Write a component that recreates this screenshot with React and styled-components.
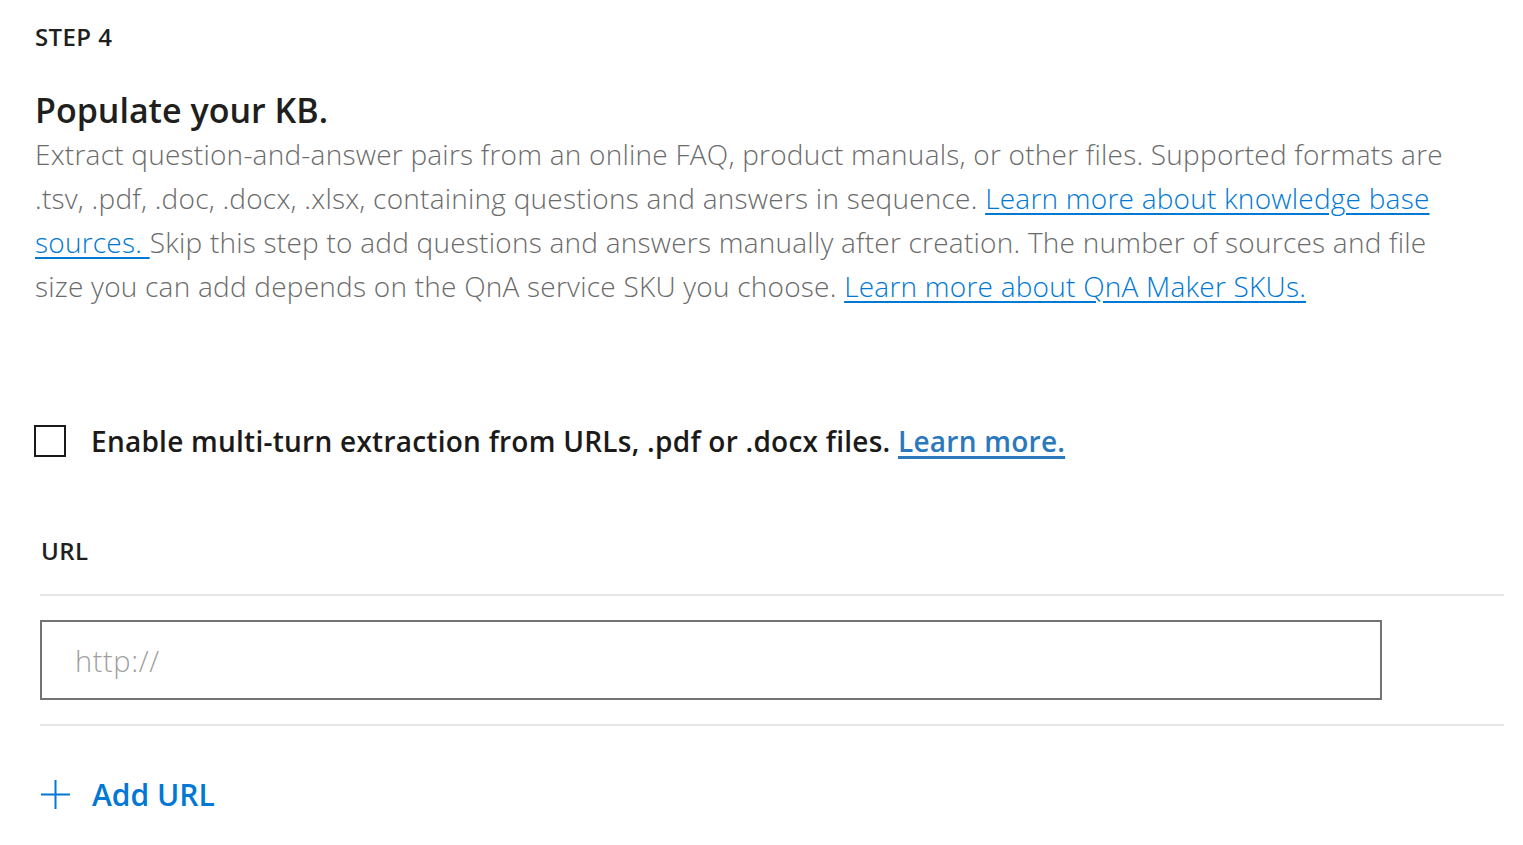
import styled, { createGlobalStyle } from "styled-components";

const GlobalStyle = createGlobalStyle`
  body {
    margin: 0;
    background: #fff;
    font-family: "Open Sans", "Noto Sans", sans-serif;
  }
`;

const App = () => {
  return (
    <Page>
      <GlobalStyle />
      <Step>STEP 4</Step>
      <Title>Populate your KB.</Title>
      <Description>
        Extract question-and-answer pairs from an online FAQ, product manuals, or other files. Supported formats are
        .tsv, .pdf, .doc, .docx, .xlsx, containing questions and answers in sequence.{" "}
        <Link href="#">Learn more about knowledge base sources. </Link>
        Skip this step to add questions and answers manually after creation. The number of sources and file
        size you can add depends on the QnA service SKU you choose.{" "}
        <Link href="#">Learn more about QnA Maker SKUs.</Link>
      </Description>

      <CheckRow>
        <Checkbox type="checkbox" />
        <CheckLabel>
          Enable multi-turn extraction from URLs, .pdf or .docx files. <MoreLink href="#">Learn more.</MoreLink>
        </CheckLabel>
      </CheckRow>

      <UrlSection>
        <FieldLabel>URL</FieldLabel>
        <InputRow>
          <UrlInput placeholder="http://" />
        </InputRow>
        <AddButton>
          <svg width="31" height="31" viewBox="0 0 31 31">
            <path d="M15.5 1v29M1 15.5h29" stroke="#0078d4" strokeWidth="2" fill="none" />
          </svg>
          Add URL
        </AddButton>
      </UrlSection>
    </Page>
  );
};

export default App;

const Page = styled.div`
  padding: 21px 19px 0 35px;
  color: #201f1e;
`;

const Step = styled.div`
  font-size: 24px;
  font-weight: 600;
  line-height: 32px;
  letter-spacing: 0.4px;
`;

const Title = styled.h1`
  margin: 35px 0 0;
  font-size: 34px;
  font-weight: 600;
  line-height: 44px;
`;

const Description = styled.p`
  margin: 0;
  max-width: 1430px;
  font-size: 28px;
  font-weight: 300;
  line-height: 44px;
  letter-spacing: 0.23px;
  color: #6b6b6b;
`;

const Link = styled.a`
  color: #0078d4;
  text-decoration: underline;
  text-underline-offset: 4px;
  text-decoration-thickness: 2px;
`;

const CheckRow = styled.label`
  display: flex;
  align-items: center;
  gap: 25px;
  margin-top: 114px;
`;

const Checkbox = styled.input`
  appearance: none;
  margin: 0 0 0 -1px;
  width: 32px;
  height: 32px;
  border: 2px solid #1b1a19;
  box-sizing: border-box;
  background: #fff;
  flex-shrink: 0;
`;

const CheckLabel = styled.span`
  font-size: 28px;
  font-weight: 600;
  letter-spacing: 0.25px;
  color: #1b1a19;
`;

const MoreLink = styled.a`
  color: #2b78bd;
  text-decoration: underline;
  text-underline-offset: 4px;
  text-decoration-thickness: 3px;
`;

const UrlSection = styled.div`
  margin-left: 5px;
  margin-top: 75px;
`;

const FieldLabel = styled.div`
  padding-left: 1px;
  font-size: 24px;
  font-weight: 600;
  line-height: 32px;
  letter-spacing: 0.4px;
  color: #201f1e;
`;

const InputRow = styled.div`
  margin-top: 27px;
  padding: 24px 0 24px;
  border-top: 2px solid #e6e6e6;
  border-bottom: 2px solid #e6e6e6;
`;

const UrlInput = styled.input`
  display: block;
  width: 1342px;
  height: 80px;
  box-sizing: border-box;
  padding: 0 33px;
  border: 2px solid #737373;
  font-family: "Open Sans", "Noto Sans", sans-serif;
  font-size: 29px;
  font-weight: 300;
  letter-spacing: 0.6px;
  color: #201f1e;
  outline: none;

  &::placeholder {
    color: #a19f9d;
  }
`;

const AddButton = styled.button`
  display: flex;
  align-items: center;
  gap: 21px;
  margin-top: 48px;
  padding: 0;
  border: none;
  background: none;
  font-family: "Open Sans", "Noto Sans", sans-serif;
  font-size: 30px;
  font-weight: 600;
  color: #0078d4;
  cursor: pointer;
`;
